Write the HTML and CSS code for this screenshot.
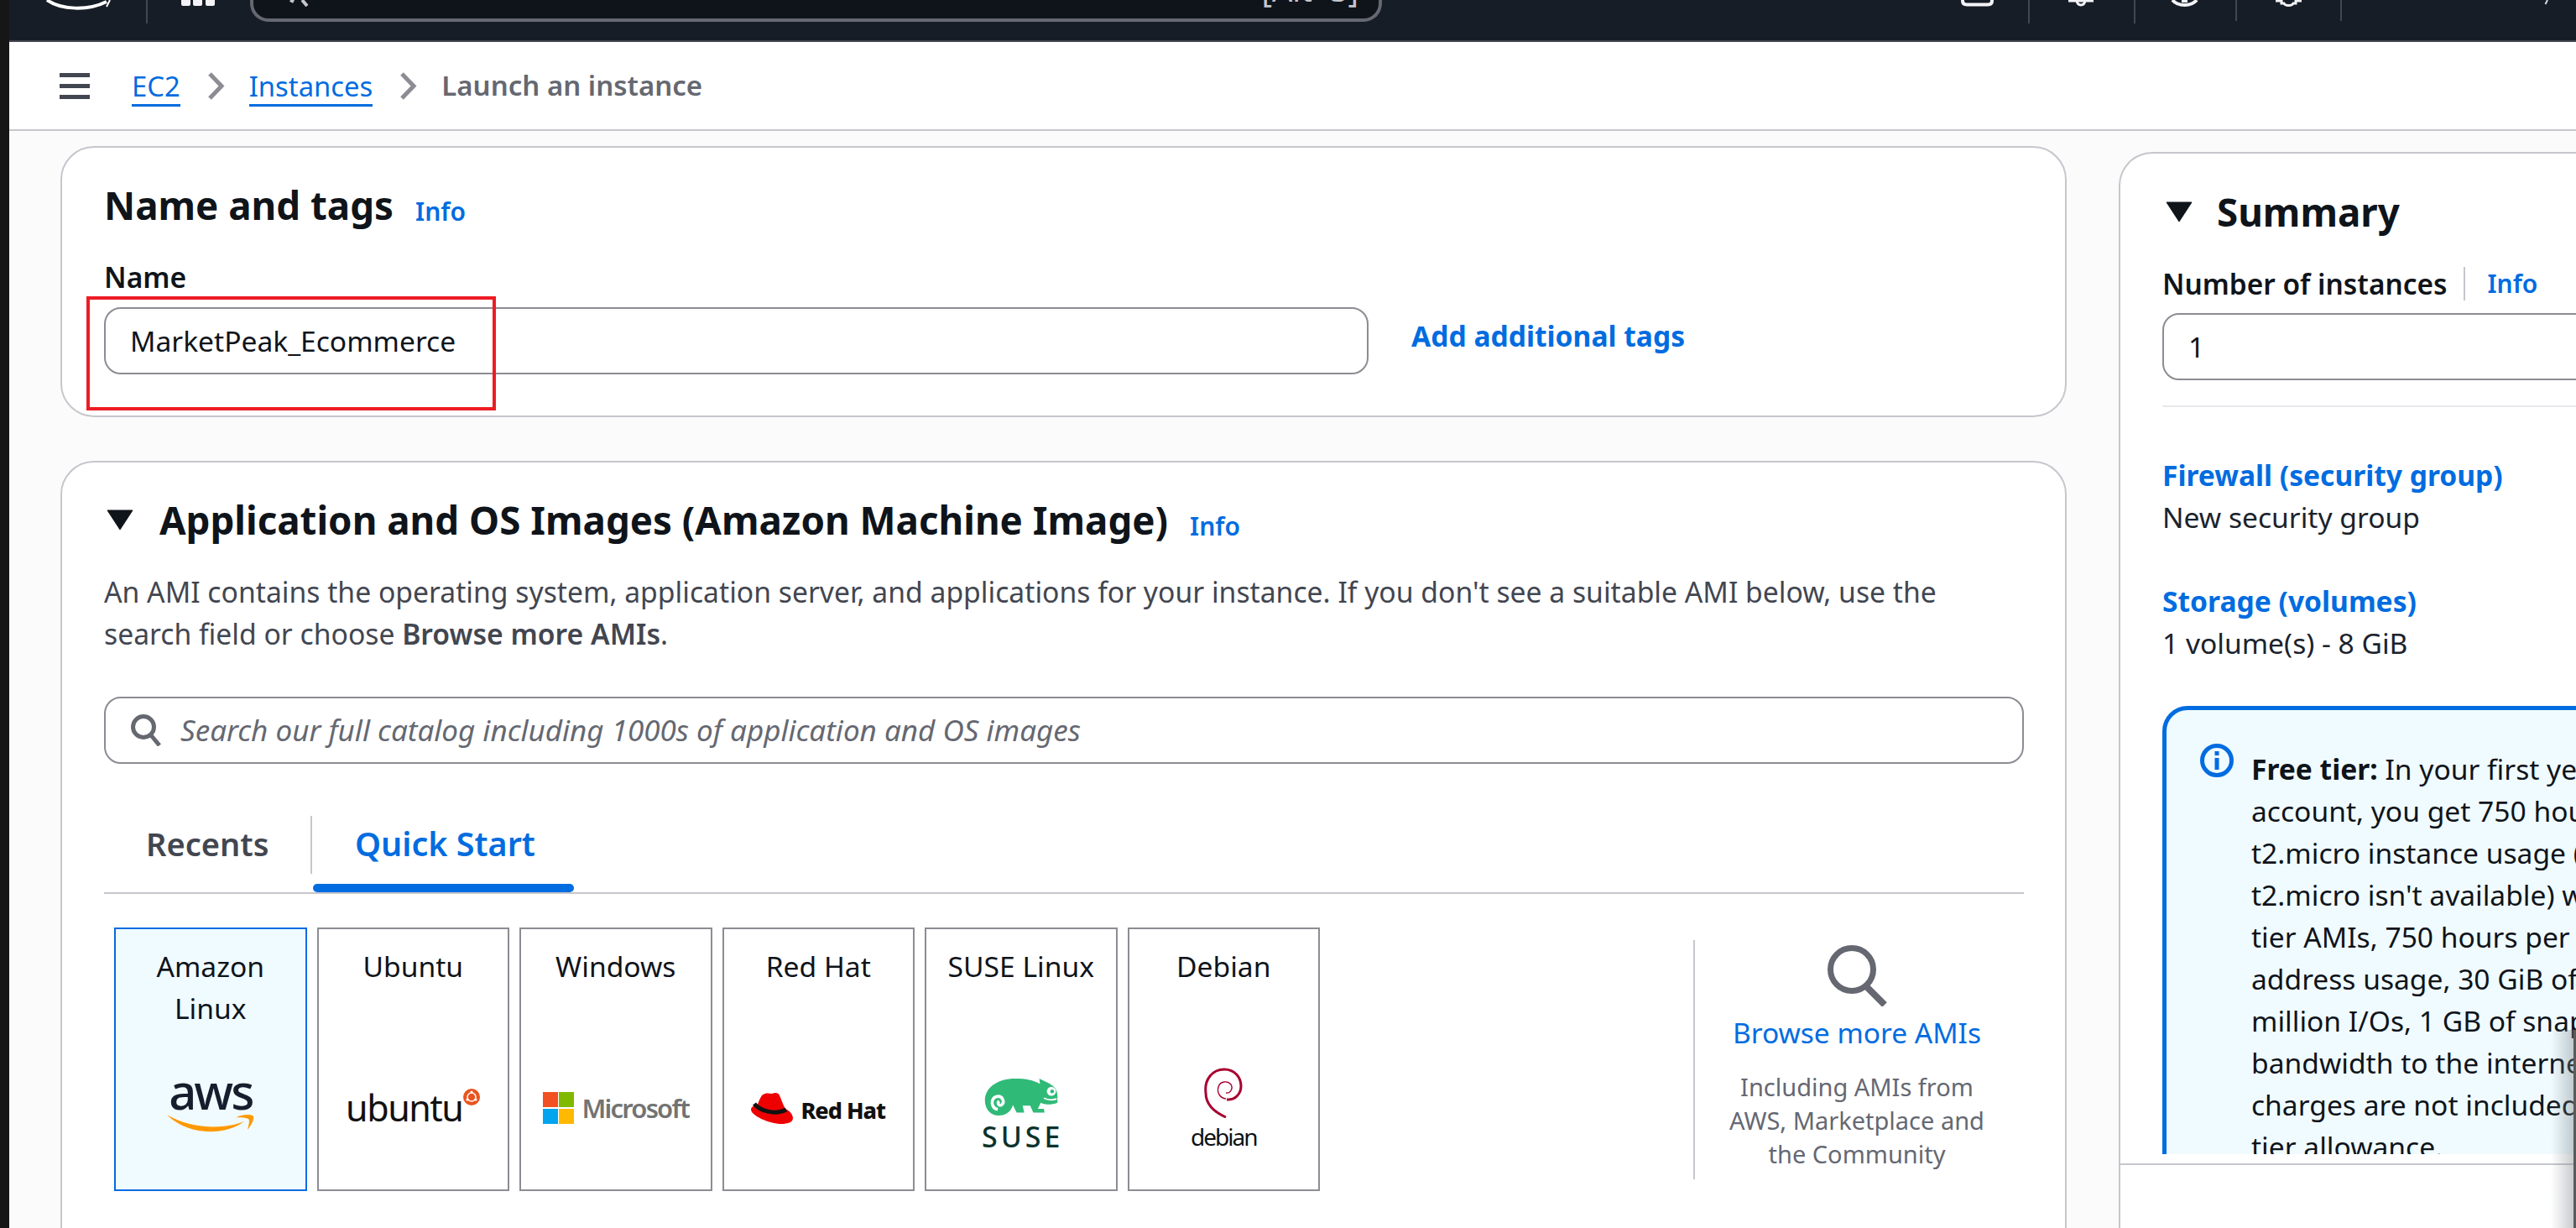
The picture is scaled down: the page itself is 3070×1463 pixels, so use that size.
FILE: index.html
```html
<!DOCTYPE html>
<html lang="en">
<head>
    <meta charset="UTF-8">
    <title>Launch an instance | EC2</title>
    <link rel="stylesheet" href="styles.css">
</head>
<body>
<div class="strip"></div>
<div class="app">
    <header class="topnav">
        <svg class="nav-smile" width="78" height="12" viewBox="0 0 78 12"><path d="M1 0 C18 12 50 13 72 2" fill="none" stroke="#fff" stroke-width="4"/><path d="M76 0 L72 8" fill="none" stroke="#fff" stroke-width="2"/></svg>
        <div class="nav-sep nav-sep-first"></div>
        <svg class="nav-grid" width="40" height="8" viewBox="0 0 40 8"><rect x="0" y="-6" width="11" height="13" rx="2" fill="#f3f3f7"/><rect x="14" y="-6" width="11" height="13" rx="2" fill="#f3f3f7"/><rect x="29" y="-6" width="11" height="13" rx="2" fill="#f3f3f7"/></svg>
        <div class="nav-search">
            <svg class="nav-search-icon" width="26" height="8" viewBox="0 0 26 8"><path d="M2 0 L6 2 M16 0 L22 7" fill="none" stroke="#c6c6cd" stroke-width="4"/></svg>
            <span class="nav-search-text">Search</span>
            <span class="nav-search-key">[Alt+S]</span>
        </div>
        <svg class="nav-icon nav-icon-cloud" width="39" height="8" viewBox="0 0 39 8"><path d="M2 0 V1 Q2 5.500 7 5.500 H32 Q37 5.500 37 1 V0" fill="none" stroke="#f3f3f7" stroke-width="4"/></svg>
        <div class="nav-sep nav-sep-a"></div>
        <svg class="nav-icon nav-icon-bell" width="30" height="8" viewBox="0 0 30 8"><path d="M0 1 H30 M10 1 Q11 6 15 6 Q19 6 20 1" fill="none" stroke="#f3f3f7" stroke-width="3"/></svg>
        <div class="nav-sep nav-sep-b"></div>
        <svg class="nav-icon nav-icon-help" width="33" height="8" viewBox="0 0 33 8"><path d="M2 0 Q7 6 16.500 6 Q26 6 31 0 M13 1 H20" fill="none" stroke="#f3f3f7" stroke-width="4"/></svg>
        <div class="nav-sep nav-sep-short nav-sep-c"></div>
        <svg class="nav-icon nav-icon-gear" width="31" height="8" viewBox="0 0 31 8"><path d="M0 1 H7 V4 H10 Q11 6.500 15.500 6.500 Q20 6.500 21 4 H24 V1 H31" fill="none" stroke="#f3f3f7" stroke-width="3"/></svg>
        <div class="nav-sep nav-sep-short nav-sep-d"></div>
        <svg class="nav-icon nav-icon-user" width="6" height="6" viewBox="0 0 6 6"><path d="M4 0 L1.500 5" fill="none" stroke="#d5dbe6" stroke-width="2"/></svg>
    </header>

    <nav class="crumbs">
        <div class="burger"><span></span><span></span><span></span></div>
        <a class="crumb-link">EC2</a>
        <svg class="crumb-arrow" width="21" height="33" viewBox="0 0 21 33"><path d="M3 2 L17 16.5 L3 31" fill="none" stroke="#8c8c94" stroke-width="5"/></svg>
        <a class="crumb-link">Instances</a>
        <svg class="crumb-arrow" width="21" height="33" viewBox="0 0 21 33"><path d="M3 2 L17 16.5 L3 31" fill="none" stroke="#8c8c94" stroke-width="5"/></svg>
        <span class="crumb-current">Launch an instance</span>
    </nav>

    <div class="content">
        <main class="main">
            <section class="card card-name">
                <div class="card-head">
                    <h2>Name and tags</h2>
                    <a class="info">Info</a>
                </div>
                <div class="label">Name</div>
                <div class="name-row">
                    <div class="field field-name">MarketPeak_Ecommerce</div>
                    <a class="link-bold">Add additional tags</a>
                </div>
                <div class="red-box"></div>
            </section>

            <section class="card card-ami">
                <div class="card-head">
                    <svg class="caret" width="32" height="25" viewBox="0 0 32 25"><path d="M1 1 H31 L16 24 Z" fill="#0f141a" stroke="#0f141a" stroke-linejoin="round"/></svg>
                    <h2>Application and OS Images (Amazon Machine Image)</h2>
                    <a class="info">Info</a>
                </div>
                <p class="desc">An AMI contains the operating system, application server, and applications for your instance. If you don't see a suitable AMI below, use the<br>search field or choose <b>Browse more AMIs</b>.</p>
                <div class="field field-search">
                    <svg width="36" height="38" viewBox="0 0 36 38"><circle cx="15" cy="15" r="12.5" fill="none" stroke="#656871" stroke-width="5"/><path d="M24 25 L34 37" fill="none" stroke="#656871" stroke-width="5"/></svg>
                    <span>Search our full catalog including 1000s of application and OS images</span>
                </div>
                <div class="tabs">
                    <div class="tab">Recents</div>
                    <div class="tab-active">
                        <div class="tab-label">Quick Start</div>
                        <div class="tab-bar"></div>
                    </div>
                </div>
                <div class="tiles">
                    <div class="tile tile-selected">
                        <div class="tile-name">Amazon Linux</div>
                        <div class="tile-logo logo-aws">
                            <span class="aws-word">aws</span>
                            <svg width="104" height="24" viewBox="0 0 106 24"><path d="M0 1 C28 17 66 20 94 9 C70 27 25 26 0 1 Z" fill="#f90"/><path d="M84 4 C92 0 104 0 105 3 C106 7 102 14 98 19 C99 14 101 8 99 6 C96 4 90 4 84 4 Z" fill="#f90"/></svg>
                        </div>
                    </div>
                    <div class="tile">
                        <div class="tile-name">Ubuntu</div>
                        <div class="tile-logo logo-ubuntu">
                            <span class="ubuntu-word">ubuntu</span>
                            <svg class="ubuntu-mark" width="20" height="20" viewBox="0 0 20 20"><circle cx="10" cy="10" r="10" fill="#e95420"/><circle cx="10" cy="10" r="5" fill="none" stroke="#fff" stroke-width="1.5"/><circle cx="10" cy="4" r="1.6" fill="#fff"/><circle cx="5" cy="13" r="1.6" fill="#fff"/><circle cx="15" cy="13" r="1.6" fill="#fff"/></svg>
                        </div>
                    </div>
                    <div class="tile">
                        <div class="tile-name">Windows</div>
                        <div class="tile-logo logo-ms">
                            <div class="ms-grid"><i class="ms-r"></i><i class="ms-g"></i><i class="ms-b"></i><i class="ms-y"></i></div>
                            <span class="ms-word">Microsoft</span>
                        </div>
                    </div>
                    <div class="tile">
                        <div class="tile-name">Red Hat</div>
                        <div class="tile-logo logo-rh">
                            <svg width="50" height="38" viewBox="0 0 50 38"><path d="M13 4 C18 0 22 2 25 2 C28 1 32 0 34 4 C36 8 38 15 41 20 C46 22 50 27 50 31 C50 36 44 38 36 38 C22 38 0 28 0 21 C0 18 3 16 8 15 C9 11 11 7 13 4 Z" fill="#e00"/><path d="M4 14 C10 22 28 28 42 21" fill="none" stroke="#111" stroke-width="5"/></svg>
                            <span class="rh-word">Red Hat</span>
                        </div>
                    </div>
                    <div class="tile">
                        <div class="tile-name">SUSE Linux</div>
                        <div class="tile-logo logo-suse">
                            <svg width="96" height="50" viewBox="0 0 96 50"><path d="M0 30 C0 12 18 1 40 1 C54 1 64 3 73 8 L72 1 L84 7 C92 11 96 16 96 24 L96 33 C88 36 80 36 74 33 L70 41 L78 41 L79 46 L64 46 L60 37 L50 37 L52 46 L42 46 L37 36 C35 44 28 50 18 50 C8 50 0 42 0 30 Z" fill="#30ba78"/><path d="M17 42 C8 40 7 28 15 25 C23 23 27 32 22 36 C18 38 16 33 19 31" fill="none" stroke="#fff" stroke-width="4"/><circle cx="88" cy="18" r="6" fill="#fff"/><circle cx="89" cy="18" r="2.5" fill="#30ba78"/><path d="M78 27 Q86 31 95 28" fill="none" stroke="#fff" stroke-width="2"/></svg>
                            <span class="suse-word">SUSE</span>
                        </div>
                    </div>
                    <div class="tile">
                        <div class="tile-name">Debian</div>
                        <div class="tile-logo logo-debian">
                            <svg width="46" height="60" viewBox="0 0 46 60"><path d="M26 59 C10 52 2 42 2 30 C0 14 10 2 24 2 C37 2 44 12 44 22 C44 32 36 39 27 38" fill="none" stroke="#a80030" stroke-width="3"/><path d="M26 37 C19 36 15 30 17 23 C19 16 28 15 32 20 C35 25 31 31 26 30" fill="none" stroke="#a80030" stroke-width="1.4"/></svg>
                            <span class="debian-word">debian</span>
                        </div>
                    </div>
                    <div class="browse">
                        <svg width="72" height="73" viewBox="0 0 72 73"><circle cx="29" cy="29" r="25.5" fill="none" stroke="#656871" stroke-width="7"/><path d="M46 49 L68 71" fill="none" stroke="#656871" stroke-width="8"/></svg>
                        <a class="browse-link">Browse more AMIs</a>
                        <p class="browse-note">Including AMIs from<br>AWS, Marketplace and<br>the Community</p>
                    </div>
                </div>
            </section>
        </main>

        <aside class="side">
            <div class="side-scroll">
                <div class="side-head">
                    <svg class="caret" width="32" height="25" viewBox="0 0 32 25"><path d="M1 1 H31 L16 24 Z" fill="#0f141a" stroke="#0f141a" stroke-linejoin="round"/></svg>
                    <h2>Summary</h2>
                </div>
                <div class="count-row">
                    <span class="label">Number of instances</span>
                    <a class="info">Info</a>
                </div>
                <div class="field field-count">1</div>
                <div class="side-rule"></div>
                <a class="side-link side-link-first">Firewall (security group)</a>
                <div class="side-value">New security group</div>
                <a class="side-link">Storage (volumes)</a>
                <div class="side-value">1 volume(s) - 8 GiB</div>
                <div class="alert">
                    <svg class="alert-icon" width="40" height="40" viewBox="0 0 40 40"><circle cx="20" cy="20" r="17.5" fill="none" stroke="#006ce0" stroke-width="5"/><rect x="17.5" y="9" width="5" height="5" fill="#006ce0"/><rect x="17.5" y="17" width="5" height="14" fill="#006ce0"/></svg>
                    <p class="alert-text"><b>Free tier:</b> In your first year of opening an AWS<br>account, you get 750 hours per month of<br>t2.micro instance usage (or t3.micro where<br>t2.micro isn't available) when used with free<br>tier AMIs, 750 hours per month of public IPv4<br>address usage, 30 GiB of EBS storage, 2<br>million I/Os, 1 GB of snapshots, and 100 GB of<br>bandwidth to the internet. Data transfer<br>charges are not included in the free<br>tier allowance.</p>
                </div>
            </div>
            <div class="side-foot"></div>
        </aside>
    </div>
</div>
<div class="edge-shadow"></div>
</body>
</html>
```

FILE: styles.css
```css
* {
    box-sizing: border-box;
}
html, body {
    margin: 0;
    padding: 0;
    width: 3070px;
    height: 1463px;
    overflow: hidden;
}
body {
    display: flex;
    position: relative;
    font-family: "Noto Sans", "Open Sans", sans-serif;
    font-size: 33.6px;
    line-height: 50px;
    color: #0f141a;
    background: #fff;
}
h2, p {
    margin: 0;
}
a {
    color: #006ce0;
}
.strip {
    width: 11px;
    flex: none;
    background: #161616;
}
.app {
    flex: 1;
    min-width: 0;
    display: flex;
    flex-direction: column;
}

/* top bar, its upper part is scrolled off */
.topnav {
    height: 50px;
    flex: none;
    display: flex;
    align-items: flex-start;
    background: #161d26;
    border-bottom: 2px solid #424650;
}
.topnav svg {
    display: block;
    flex: none;
}
.nav-smile {
    margin-left: 44px;
}
.nav-sep {
    width: 2px;
    height: 28px;
    flex: none;
    background: #424650;
}
.nav-sep-short {
    height: 25px;
}
.nav-sep-first {
    margin-left: 41px;
}
.nav-grid {
    margin-left: 40px;
}
.nav-search {
    width: 1349px;
    height: 26px;
    flex: none;
    margin-left: 42px;
    padding: 0 24px 20px 42px;
    display: flex;
    align-items: flex-end;
    background: #0f141a;
    border: 4px solid #656871;
    border-top: 0;
    border-radius: 0 0 22px 22px;
    font-size: 33px;
    line-height: 30px;
    color: #c6c6cd;
}
.nav-search-icon {
    align-self: flex-start;
}
.nav-search-text {
    margin-left: 24px;
    flex: 1;
}
.nav-search-key {
    font-size: 38px;
}
.nav-icon-cloud {
    margin-left: 690px;
}
.nav-sep-a {
    margin-left: 41px;
}
.nav-icon-bell {
    margin-left: 46px;
}
.nav-sep-b {
    margin-left: 48px;
}
.nav-icon-help {
    margin-left: 42px;
}
.nav-sep-c {
    margin-left: 44px;
}
.nav-icon-gear {
    margin-left: 46px;
}
.nav-sep-d {
    margin-left: 46px;
}
.nav-icon-user {
    margin-left: 241px;
}

/* breadcrumbs */
.crumbs {
    height: 106px;
    flex: none;
    display: flex;
    align-items: center;
    padding-left: 60px;
    background: #fff;
    border-bottom: 2px solid #c6c6cd;
}
.burger {
    width: 36px;
    margin-right: 50px;
    display: flex;
    flex-direction: column;
    gap: 8px;
}
.burger span {
    height: 5px;
    background: #424650;
}
.crumb-link {
    font-size: 32.8px;
    line-height: 42px;
    border-bottom: 3px solid #006ce0;
    margin-top: 5px;
}
.crumb-arrow {
    margin: 0 29px 0 32px;
}
.crumb-current {
    font-size: 33px;
    font-weight: 600;
    color: #656871;
}

.content {
    flex: 1;
    min-height: 0;
    display: flex;
    background: #fbfbfc;
}
.main {
    width: 2391px;
    flex: none;
    margin-left: 61px;
    padding-top: 18px;
}

.card {
    position: relative;
    background: #fff;
    border: 2px solid #c6c6cd;
    border-radius: 40px;
    padding: 41px 50px 0;
}
.card-name {
    height: 323px;
    margin-bottom: 52px;
}
.card-ami {
    height: 1000px;
}
.card-head {
    display: flex;
    align-items: center;
    height: 55px;
    margin-bottom: 33px;
}
h2 {
    font-size: 45.7px;
    line-height: 55px;
    font-weight: 700;
}
.caret {
    margin: 0 31px 0 3px;
    flex: none;
}
.info {
    font-size: 30px;
    font-weight: 600;
    margin-left: 26px;
    padding-top: 14px;
}
.label {
    font-weight: 600;
}
.name-row {
    display: flex;
    margin-top: 11px;
}
.field {
    height: 80px;
    background: #fff;
    border: 2px solid #8c8c94;
    border-radius: 20px;
    display: flex;
    align-items: center;
    padding: 0 29px;
}
.field-name {
    width: 1507px;
}
.link-bold {
    margin: 9px 0 0 51px;
    font-weight: 700;
}
.red-box {
    position: absolute;
    left: 29px;
    top: 177px;
    width: 488px;
    height: 136px;
    border: 4px solid #ed1c24;
}

.desc {
    font-size: 33.7px;
    color: #424650;
    white-space: nowrap;
}
.desc b {
    font-weight: 600;
}
.field-search {
    width: 2288px;
    margin-top: 50px;
    padding-left: 30px;
    gap: 23px;
    font-size: 35px;
    font-style: italic;
    color: #656871;
}

.tabs {
    height: 105px;
    width: 2288px;
    margin-top: 50px;
    display: flex;
    border-bottom: 2px solid #c6c6cd;
    font-size: 38px;
    font-weight: 600;
}
.tab {
    width: 248px;
    height: 69px;
    margin-top: 12px;
    padding: 8px 0 0 50px;
    border-right: 2px solid #c6c6cd;
    color: #424650;
}
.tab-active {
    width: 311px;
    margin-left: 1px;
    padding-top: 20px;
    color: #006ce0;
}
.tab-label {
    padding-left: 50px;
    font-size: 39.5px;
}
.tab-bar {
    height: 10px;
    margin-top: 23px;
    border-radius: 5px;
    background: #006ce0;
}

.tiles {
    width: 2288px;
    margin-top: 40px;
    padding-left: 12px;
    display: flex;
    gap: 12px;
}
.tile {
    width: 229.5px;
    height: 314px;
    flex: none;
    border: 2px solid #8c8c94;
    padding: 19px 8px 0;
    text-align: center;
    background: #fff;
}
.tile-selected {
    border-color: #006ce0;
    background: #f0fbff;
}
.tile-name {
    height: 100px;
}
.tile-logo {
    height: 100px;
    margin: 44px -8px 0;
    display: flex;
    align-items: center;
    justify-content: center;
}
.logo-aws {
    flex-direction: column;
}
.aws-word {
    font-size: 58px;
    line-height: 50px;
    font-weight: 500;
    color: #161e2d;
    letter-spacing: -3px;
    margin-top: -14px;
}
.aws-word + svg {
    margin-top: 2px;
}
.ubuntu-word {
    font-size: 43px;
    color: #111;
    letter-spacing: -1.5px;
}
.ubuntu-mark {
    margin: -26px 0 0 1px;
}
.ms-grid {
    width: 37px;
    display: grid;
    grid-template-columns: 18px 18px;
    grid-auto-rows: 18px;
    gap: 2px 1px;
}
.ms-r { background: #f25022; }
.ms-g { background: #7fba00; }
.ms-b { background: #00a4ef; }
.ms-y { background: #ffb900; }
.ms-word {
    margin-left: 10px;
    font-size: 31px;
    font-weight: 600;
    color: #737373;
    letter-spacing: -1.8px;
}
.rh-word {
    margin: 5px 0 0 9px;
    font-size: 27px;
    font-weight: 800;
    color: #111;
    letter-spacing: -1px;
}
.logo-suse, .logo-debian {
    flex-direction: column;
}
.suse-word {
    font-size: 34px;
    line-height: 32px;
    font-weight: 500;
    color: #0c322c;
    letter-spacing: 4px;
    margin: 9px 0 0 4px;
}
.logo-suse svg {
    margin-top: 14px;
}
.debian-word {
    font-size: 28px;
    line-height: 30px;
    letter-spacing: -2px;
    margin-top: 7px;
    color: #111;
}
.browse {
    width: 394px;
    height: 285px;
    margin: 15px 0 0 auto;
    padding: 6px 6px 0 0;
    border-left: 2px solid #c6c6cd;
    display: flex;
    flex-direction: column;
    align-items: center;
    text-align: center;
}
.browse svg {
    margin-left: 2px;
}
.browse-link {
    margin-top: 6px;
    font-size: 33.5px;
}
.browse-note {
    margin-top: 20px;
    font-size: 29px;
    line-height: 40px;
    color: #656871;
    white-space: nowrap;
}

/* summary panel runs off the right edge */
.side {
    width: 900px;
    flex: none;
    margin: 25px 0 0 62px;
    height: 1310px;
    background: #fff;
    border-left: 2px solid #c6c6cd;
    border-top: 2px solid #c6c6cd;
    border-top-left-radius: 40px;
}
.side-scroll {
    height: 1192px;
    overflow: hidden;
    padding: 42px 50px 0;
}
.side-head {
    display: flex;
    align-items: center;
    height: 55px;
    margin-bottom: 33px;
}
.side-head .caret {
    margin: 0 29px 0 4px;
}
.count-row {
    display: flex;
    align-items: center;
}
.count-row .label {
    padding-right: 20px;
    border-right: 2px solid #c6c6cd;
    line-height: 40px;
    height: 40px;
    font-size: 33.4px;
}
.count-row .info {
    padding-top: 0;
}
.field-count {
    margin-top: 10px;
    width: 800px;
}
.side-rule {
    height: 2px;
    margin-top: 30px;
    background: #e8e8ec;
}
.side-link {
    display: block;
    margin-top: 50px;
    font-weight: 700;
}
.side-link-first {
    margin-top: 56px;
}
.side-value {
    color: #1b232d;
}
.alert {
    width: 800px;
    margin-top: 50px;
    height: 800px;
    display: flex;
    gap: 21px;
    padding: 40px 0 0 40px;
    background: #f0fbff;
    border: 5px solid #006ce0;
    border-radius: 30px;
}
.alert-icon {
    flex: none;
}
.alert-text {
    margin-top: 5px;
    white-space: nowrap;
}
.alert-text b {
    font-weight: 700;
}
.side-foot {
    margin-top: 11px;
    height: 80px;
    border-top: 2px solid #c6c6cd;
}

.edge-shadow {
    position: absolute;
    right: 0;
    top: 1227px;
    bottom: 0;
    width: 30px;
    background: linear-gradient(to right, rgba(120, 130, 135, 0), rgba(120, 130, 135, 0.4) 90%, #5a5a5a 90%);
}
```
